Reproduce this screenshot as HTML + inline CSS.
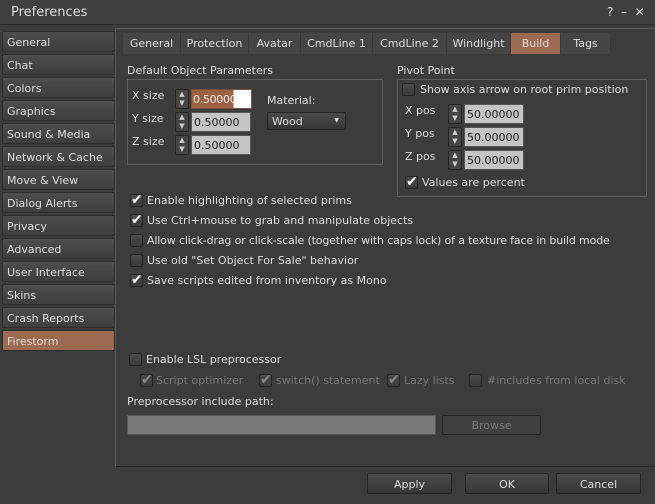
<!DOCTYPE html><html><head><style>
*{margin:0;padding:0;box-sizing:border-box}
body{width:655px;height:504px;background:#3c3c3c;font-family:"DejaVu Sans","Liberation Sans",sans-serif;font-size:11px;color:#ddd;position:relative;overflow:hidden}
.a{position:absolute;white-space:nowrap}
.title{left:0;top:0;width:655px;height:25px;background:#3f3f3f;border-bottom:1px solid #2c2c2c}
.si{position:absolute;left:2px;width:113px;height:21px;background:linear-gradient(#4d4d4d,#3e3e3e);border:1px solid #2e2e2e;border-radius:2px;padding:4px 0 0 4px}
.tab{position:absolute;top:33px;height:21px;background:#454545;padding-top:4px;text-align:center;border-right:1px solid #3a3a3a}
.cb{position:absolute;width:13px;height:13px;background:linear-gradient(#4a4a4a,#3a3a3a);border:1px solid #262626;border-radius:2px;font-size:14px;line-height:11px;color:#fff;text-align:center}
.sp{position:absolute;width:14px;height:20px;background:#454545;border:1px solid #262626;border-radius:2px;font-size:7px;line-height:9px;text-align:center;color:#ccc}
.fld{position:absolute;height:20px;background:#c4c4c4;color:#222;padding:3px 0 0 2px;border:1px solid #555;overflow:hidden}
.btn{position:absolute;height:21px;background:linear-gradient(#4a4a4a,#363636);border:1px solid #262626;border-radius:2px;text-align:center;padding-top:4px}
.box{position:absolute;border:1px solid #5e5e5e}
.dis{color:#777}
</style></head><body>
<div class="a title"></div>
<div class="a" style="left:11px;top:5px;font-size:13px">Preferences</div>
<div class="a" style="left:607px;top:5px;font-size:12px">?&nbsp;&nbsp;–&nbsp;&nbsp;✕</div>
<div class="si" style="top:31px">General</div>
<div class="si" style="top:54px">Chat</div>
<div class="si" style="top:77px">Colors</div>
<div class="si" style="top:100px">Graphics</div>
<div class="si" style="top:123px">Sound &amp; Media</div>
<div class="si" style="top:146px">Network &amp; Cache</div>
<div class="si" style="top:169px">Move &amp; View</div>
<div class="si" style="top:192px">Dialog Alerts</div>
<div class="si" style="top:215px">Privacy</div>
<div class="si" style="top:238px">Advanced</div>
<div class="si" style="top:261px">User Interface</div>
<div class="si" style="top:284px">Skins</div>
<div class="si" style="top:307px">Crash Reports</div>
<div class="si" style="top:330px;background:#9c6a50">Firestorm</div>
<div class="a" style="left:115px;top:28px;width:541px;height:439px;border-left:1px solid #5a5a5a;border-top:1px solid #5a5a5a;border-bottom:1px solid #262626"></div>
<div class="tab" style="left:123px;width:58px">General</div>
<div class="tab" style="left:181px;width:68px">Protection</div>
<div class="tab" style="left:249px;width:52px">Avatar</div>
<div class="tab" style="left:301px;width:72px">CmdLine 1</div>
<div class="tab" style="left:373px;width:74px">CmdLine 2</div>
<div class="tab" style="left:447px;width:64px">Windlight</div>
<div class="tab" style="left:511px;width:50px;background:#9c6a50">Build</div>
<div class="tab" style="left:561px;width:50px">Tags</div>
<div class="a" style="left:127px;top:64px">Default Object Parameters</div>
<div class="box" style="left:127px;top:79px;width:256px;height:86px"></div>
<div class="a" style="left:132px;top:89px">X size</div>
<div class="a" style="left:132px;top:112px">Y size</div>
<div class="a" style="left:132px;top:135px">Z size</div>
<div class="sp" style="left:175px;top:89px">▲<br>▼</div>
<div class="sp" style="left:175px;top:112px">▲<br>▼</div>
<div class="sp" style="left:175px;top:135px">▲<br>▼</div>
<div class="fld" style="left:191px;top:89px;width:61px;background:linear-gradient(90deg,#9c6040 0,#9c6040 70%,#fff 70%);color:#eee;border-color:#7a5040;padding-left:1px;letter-spacing:-0.3px">0.50000</div>
<div class="fld" style="left:191px;top:112px;width:60px">0.50000</div>
<div class="fld" style="left:191px;top:135px;width:60px">0.50000</div>
<div class="a" style="left:267px;top:94px">Material:</div>
<div class="btn" style="left:267px;top:112px;width:79px;height:18px;padding:2px 0 0 4px;text-align:left">Wood<span style="position:absolute;right:6px;top:4px;font-size:6px">▼</span></div>
<div class="a" style="left:397px;top:64px">Pivot Point</div>
<div class="box" style="left:397px;top:79px;width:250px;height:118px"></div>
<div class="cb" style="left:402px;top:83px"></div>
<div class="a" style="left:420px;top:83px">Show axis arrow on root prim position</div>
<div class="a" style="left:405px;top:104px">X pos</div>
<div class="a" style="left:405px;top:127px">Y pos</div>
<div class="a" style="left:405px;top:150px">Z pos</div>
<div class="sp" style="left:448px;top:104px">▲<br>▼</div>
<div class="sp" style="left:448px;top:127px">▲<br>▼</div>
<div class="sp" style="left:448px;top:150px">▲<br>▼</div>
<div class="fld" style="left:464px;top:104px;width:60px">50.00000</div>
<div class="fld" style="left:464px;top:127px;width:60px">50.00000</div>
<div class="fld" style="left:464px;top:150px;width:60px">50.00000</div>
<div class="cb" style="left:405px;top:176px">✔</div>
<div class="a" style="left:422px;top:176px">Values are percent</div>
<div class="cb" style="left:130px;top:194px">✔</div><div class="a" style="left:147px;top:194px">Enable highlighting of selected prims</div>
<div class="cb" style="left:130px;top:214px">✔</div><div class="a" style="left:147px;top:214px">Use Ctrl+mouse to grab and manipulate objects</div>
<div class="cb" style="left:130px;top:234px"></div><div class="a" style="left:147px;top:234px;letter-spacing:-0.15px">Allow click-drag or click-scale (together with caps lock) of a texture face in build mode</div>
<div class="cb" style="left:130px;top:254px"></div><div class="a" style="left:147px;top:254px">Use old "Set Object For Sale" behavior</div>
<div class="cb" style="left:130px;top:274px">✔</div><div class="a" style="left:147px;top:274px">Save scripts edited from inventory as Mono</div>
<div class="cb" style="left:129px;top:353px"></div><div class="a" style="left:146px;top:353px">Enable LSL preprocessor</div>
<div class="cb" style="left:140px;top:374px;color:#888">✔</div><div class="a dis" style="left:156px;top:374px">Script optimizer</div>
<div class="cb" style="left:259px;top:374px;color:#888">✔</div><div class="a dis" style="left:276px;top:374px">switch() statement</div>
<div class="cb" style="left:387px;top:374px;color:#888">✔</div><div class="a dis" style="left:404px;top:374px">Lazy lists</div>
<div class="cb" style="left:469px;top:374px"></div><div class="a dis" style="left:487px;top:374px">#includes from local disk</div>
<div class="a" style="left:127px;top:395px">Preprocessor include path:</div>
<div class="a" style="left:127px;top:415px;width:309px;height:20px;background:#7a7a7a;border:1px solid #555"></div>
<div class="btn dis" style="left:442px;top:415px;width:99px;height:20px;padding-top:3px;background:#404040">Browse</div>
<div class="btn" style="left:367px;top:473px;width:85px">Apply</div>
<div class="btn" style="left:465px;top:473px;width:84px">OK</div>
<div class="btn" style="left:556px;top:473px;width:85px">Cancel</div>
</body></html>
